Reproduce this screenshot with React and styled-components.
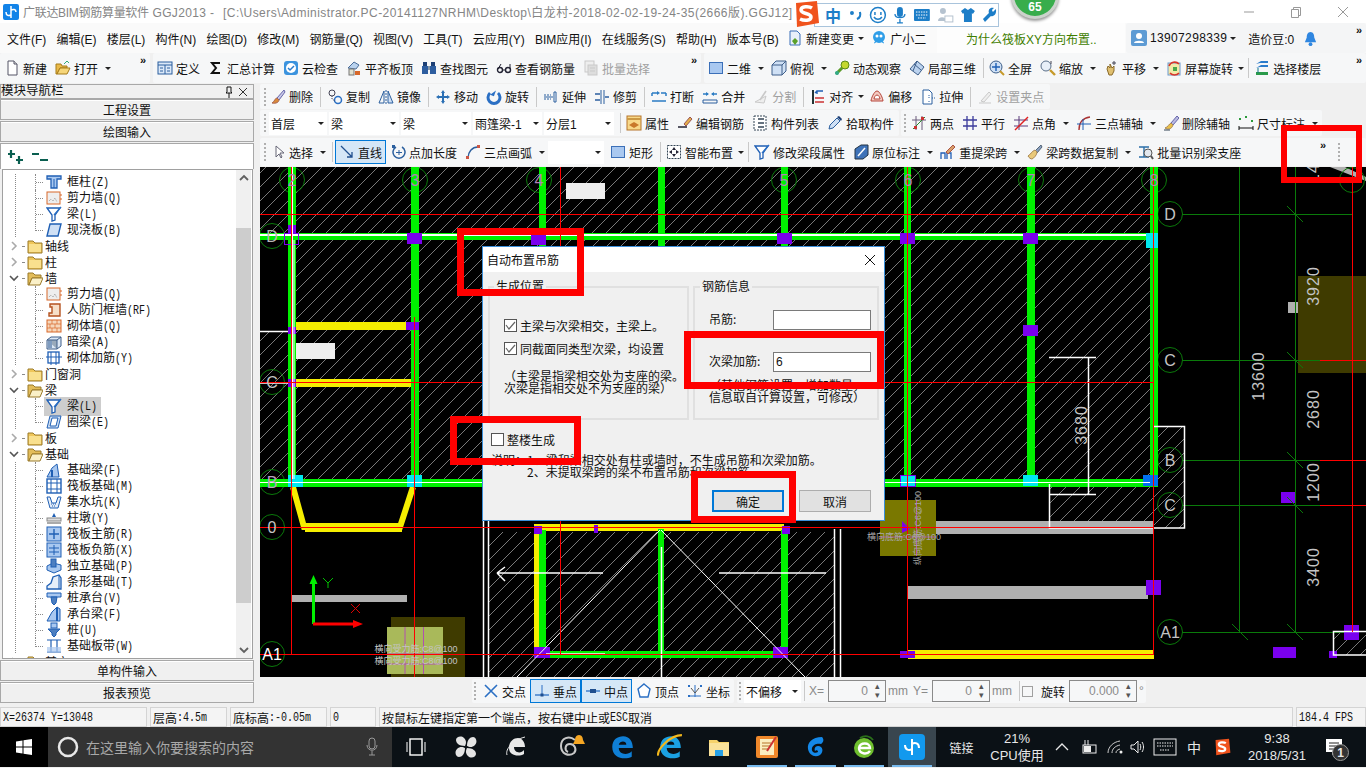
import React from 'react'
import styled, { createGlobalStyle } from 'styled-components'

const GlobalStyle = createGlobalStyle`
  html, body {
    background: #f0f0f0;
    margin: 0;
    padding: 0;
  }

  body {
    color: #111;
    font-family: "Liberation Sans", "Noto Sans CJK SC", sans-serif;
    font-size: 12px;
    overflow: hidden;
  }
`

const Root = styled.div`
  display: flex;
  flex-flow: column;
  height: 768px;
  overflow: hidden;
  position: relative;
  width: 1366px;
`

/* ---------- icons ---------- */

const B = '#1f5fb4'
const L = '#a9c8f0'
const O = '#d8682a'
const G = '#c9c9c9'

const icons = {
  doc: <><path d="M4 1h6l3 3v11H4z" fill="#fff" stroke="#556" /><path d="M10 1v3h3" fill="#ddd" stroke="#556" /></>,
  open: <><path d="M1 4h5l1 2h5v2H5l-3 6H1z" fill="#e9b949" stroke="#a67c1a" /><path d="M5 8h10l-3 6H2z" fill="#f6d67a" stroke="#a67c1a" /><path d="M9 4l3-3 2 2" fill="none" stroke="#3a7" /></>,
  define: <><rect x="1" y="2" width="14" height="12" fill="#dbe8f8" stroke="#2b5f9e" /><path d="M1 5h14M8 5v9M3 8h3M3 11h3M10 8h3M10 11h3" stroke="#2b5f9e" /></>,
  sigma: <path d="M12 3H4l4 5-4 5h8" fill="none" stroke="#111" strokeWidth="2" />,
  cloud: <><rect x="1" y="1" width="14" height="14" rx="3" fill="#3b93de" /><circle cx="8" cy="8" r="5" fill="#fff" /><path d="M5 8l2 2 4-4" fill="none" stroke="#2b7ccc" strokeWidth="1.5" /></>,
  flush: <><path d="M2 8l6-6 5 3-3 4z" fill="#b9d2ee" stroke="#4a6d99" /><rect x="3" y="9" width="5" height="6" fill="#e0e0d0" stroke="#777" /><rect x="9" y="11" width="5" height="4" fill={O} /></>,
  binoc: <><rect x="2" y="2" width="4" height="4" fill="#1c3f75" /><rect x="10" y="2" width="4" height="4" fill="#1c3f75" /><rect x="1" y="6" width="6" height="8" fill="#2d5d9f" /><rect x="9" y="6" width="6" height="8" fill="#2d5d9f" /><rect x="7" y="6" width="2" height="4" fill="#89a" /></>,
  glasses: <><circle cx="4" cy="10" r="2.5" fill="none" stroke="#223" strokeWidth="1.4" /><circle cx="12" cy="10" r="2.5" fill="none" stroke="#223" strokeWidth="1.4" /><path d="M6 10h3M2 9l3-5M14 9V4" fill="none" stroke="#223" /></>,
  batch: <><rect x="2" y="1" width="9" height="11" fill="#eee" stroke={G} /><rect x="5" y="5" width="9" height="10" fill="#ddd" stroke={G} /><path d="M7 8h5M7 11h5" stroke={G} /></>,
  square: <rect x="1.5" y="2.5" width="13" height="11" fill={L} stroke="#3b6fb8" />,
  cube: <><path d="M1 5l4-4h10v10l-4 4H1z" fill="#cfe0f5" stroke="#3e5f8a" /><path d="M1 5h10v10M11 5l4-4" fill="none" stroke="#3e5f8a" /></>,
  orbit: <><path d="M2 14L12 4" stroke="#5a9a2a" strokeWidth="3" /><circle cx="11" cy="5" r="4" fill="#c4d82e" stroke="#5a8a1a" /><circle cx="3" cy="13" r="2" fill="#3a8" /></>,
  partial: <><path d="M8 1l7 6-6 8-8-6z" fill="#bcd3ef" stroke="#3e5f8a" /><path d="M5 4l7 6M8 1L4 11" stroke="#3e5f8a" /></>,
  full: <><circle cx="7" cy="7" r="6" fill="#cfe0f5" stroke="#3e5f8a" /><path d="M7 3v8M3 7h8" stroke={B} strokeWidth="1.4" /><path d="M11 11l4 4" stroke="#c69a2a" strokeWidth="2" /></>,
  zoom: <><circle cx="6" cy="6" r="5" fill="#e8eff8" stroke="#5a6f8a" /><path d="M10 10l5 5" stroke="#c69a2a" strokeWidth="2.4" /><path d="M11 1v3" stroke="#445" /></>,
  hand: <><path d="M4 9l1-3 2 2V4l2 4 2-2v5l-2 4H6z" fill="#e0c070" stroke="#8a6a2a" /><path d="M11 1v4M9 3h4" stroke="#445" /></>,
  screen: <><rect x="2" y="3" width="12" height="12" fill="#f3e9a8" stroke="#6a9ad0" /><path d="M3 6a6 6 0 0 1 10-2M13 13a6 6 0 0 1-9 0" fill="none" stroke="#d9352a" strokeWidth="1.6" /><rect x="7" y="7" width="4" height="4" fill="#4aa84a" /></>,
  floors: <><path d="M2 4l5-3h7v2H6zM2 8l5-3h7v2H6z" fill="#2b7ccc" /><path d="M2 12h12v3H2z" fill="#2a9a4a" /><path d="M4 8v5" stroke="#178" /></>,
  brush: <><path d="M14 1L7 9l2 2 6-8z" fill="#c9c9e8" stroke="#66a" /><path d="M7 9c-2 0-2 3-5 5 4 1 7-1 7-3z" fill="#d98a3a" stroke="#a65" /></>,
  copy: <><circle cx="5" cy="4" r="3" fill="none" stroke="#445" /><circle cx="11" cy="11" r="3.5" fill="none" stroke="#2a6fc4" strokeWidth="1.5" /><path d="M5 7v3l3 2" fill="none" stroke="#445" strokeDasharray="1 1" /></>,
  mirror: <><path d="M6 2v12H1z" fill="none" stroke="#2b5f9e" /><path d="M10 2v12h5z" fill="#cfe0f5" stroke="#2b5f9e" /><path d="M8 1v14" stroke="#2b5f9e" strokeDasharray="2 1" /></>,
  move: <path d="M8 1l2 3H9v3h3V6l3 2-3 2V9H9v3h1l-2 3-2-3h1V9H4v1L1 8l3-2v1h3V4H6z" fill="#2a6fb4" />,
  spin: <><path d="M4 4a6 6 0 1 0 8 0" fill="none" stroke="#2a6fc4" strokeWidth="3" /><path d="M9 1v6H5z" fill="#2a6fc4" transform="rotate(20 8 4)" /></>,
  extend: <><path d="M1 6h7M1 10h7" stroke="#2b5f9e" strokeDasharray="2 1" /><path d="M11 3h2v10h-2z" fill="#fff" stroke="#2b5f9e" /><path d="M1 8h9" stroke="#2b5f9e" /></>,
  trim: <><path d="M7 1v14M10 1v14" stroke="#2b5f9e" /><path d="M1 5h5M1 11h5M11 8h4" stroke="#2b5f9e" strokeWidth="1.4" /></>,
  split: <><path d="M1 4h5M10 4h5M1 4v3M15 4v3M1 12h14" stroke="#2b7cc4" strokeWidth="1.5" /><path d="M6 2l3 2-3 2z" fill="#2b7cc4" /></>,
  merge: <><path d="M1 11h14v3H1z" fill="none" stroke="#2b5f9e" /><path d="M1 5h5M10 5h5" stroke="#2b7cc4" strokeWidth="1.4" /><path d="M4 3l3 2-3 2zM12 3L9 5l3 2z" fill="#2b7cc4" /></>,
  cut: <><path d="M2 13l11-6-2 7z" fill="#eee" stroke={G} /><path d="M7 11l6-9" stroke={G} strokeWidth="1.6" /></>,
  align: <><path d="M3 1v14" stroke="#233" strokeWidth="2" /><path d="M13 2H7v3M7 2L5 4" fill="none" stroke={B} strokeWidth="1.4" /><path d="M5 9h9M5 13h9" stroke="#c33" strokeWidth="1.4" /></>,
  offset: <><path d="M8 2c3 0 6 8 6 10H2C2 10 5 2 8 2z" fill="#f3c9c0" stroke="#b5453a" /><path d="M8 6c2 0 3 3 3 4H5c0-1 1-4 3-4z" fill="#fff" stroke="#b5453a" /></>,
  stretch: <><path d="M3 1h6l3 3v11H3z" fill="#fff" stroke="#2b5f9e" /><path d="M9 6v3M9 12v2M12 9h3" stroke="#2b5f9e" strokeDasharray="1 1" /></>,
  grip: <><path d="M2 14h12" stroke={G} /><path d="M4 12L12 3l2 2-7 8z" fill="#eee" stroke={G} /></>,
  prop: <><rect x="1" y="1" width="14" height="14" fill="#f8d98a" stroke="#b5752a" /><path d="M1 4h14" stroke="#c94" strokeWidth="2" /><path d="M3 10l5-3 5 3-5 3z" fill="#c9792a" /></>,
  edit: <><path d="M1 12h9" stroke="#223" strokeWidth="1.5" /><path d="M7 9l6-7 2 2-6 7z" fill="#e5b04a" stroke="#955" /></>,
  list: <><rect x="2" y="1" width="12" height="14" fill="#fff" stroke="#345" strokeDasharray="2 1" /><path d="M6 4h6M6 8h6M6 12h6" stroke="#345" strokeWidth="1.4" /></>,
  pick: <><path d="M2 14l1-4 7-7 3 3-7 7z" fill="#cfe0f5" stroke="#2b5f9e" /><path d="M10 2l2-1 3 3-1 2z" fill="#1c3f75" /></>,
  two: <><path d="M1 5h14M5 1v14M11 1v14" stroke="#6a5a7a" /><path d="M2 14L14 2" stroke="#2a8a2a" /><rect x="3" y="11" width="3" height="3" fill="#c33" /><rect x="10" y="2" width="3" height="3" fill="#c33" /></>,
  parallel: <path d="M1 5h14M1 11h14M5 1v14M11 1v14" stroke="#3b3b9b" strokeWidth="1.3" />,
  angle: <><path d="M1 5h14M1 11h14M6 1v14" stroke="#5a3b7b" /><path d="M2 15L15 2" stroke="#e02020" strokeWidth="1.4" /></>,
  arc3: <><path d="M3 15C3 7 7 3 14 2" fill="none" stroke="#a33" strokeWidth="1.4" /><path d="M1 9h14M7 4v11" stroke={B} /></>,
  broom: <><path d="M14 1l-6 7 2 2 6-7z" fill="#b9b9e0" stroke="#66a" /><path d="M8 8c-2 1-3 4-6 5 3 2 7 1 8-3z" fill="#e9c04a" stroke="#a85" /><path d="M1 15h6" stroke="#345" /></>,
  dim: <><path d="M1 11v4M15 11v4M1 13h14" stroke="#111" /><rect x="1" y="3" width="2" height="2" fill="#2a9a3a" /><rect x="7" y="1" width="2" height="2" fill="#2a9a3a" /><rect x="13" y="5" width="2" height="2" fill="#2a9a3a" /></>,
  pointer: <path d="M6 2v11l3-3 2 4 1-1-2-4h4z" fill="#fff" stroke="#667" />,
  line: <path d="M2 2l11 11M13 8v5H8" fill="none" stroke="#1f4f8f" strokeWidth="1.3" />,
  addlen: <><path d="M6 3a6 6 0 1 0 6 0" fill="none" stroke="#2b5f9e" strokeWidth="1.5" /><path d="M9 6v5M6 8.500h6" stroke="#2b5f9e" /><rect x="2" y="1" width="3" height="3" fill="#2b5f9e" /></>,
  arc: <><path d="M3 14C3 8 7 3 13 3" fill="none" stroke="#2b5f9e" strokeWidth="1.4" /><rect x="1" y="12" width="3" height="3" fill="#c54" /><rect x="12" y="1" width="3" height="3" fill="#c54" /></>,
  smart: <><rect x="1.500" y="1.500" width="13" height="13" fill="#fff" stroke="#345" strokeDasharray="2 1" /><path d="M8 3l2 3H6zM8 13l2-3H6zM3 8l3-2v4zM13 8l-3-2v4z" fill="#223" /></>,
  funnel: <><path d="M1 2h13L9 9v5L6 15V9z" fill="#fff" stroke={B} strokeWidth="1.300" /><path d="M15 1L8 9" stroke="#2a6fc4" strokeWidth="1.400" /></>,
  mark: <><path d="M2 15V5l6-4h7v10l-5 4z" fill="#3e72b8" stroke="#234" /><path d="M5 12l7-8" stroke="#fff" strokeWidth="1.500" /></>,
  refetch: <><path d="M1 15V9h4v6M7 15V9h4v6" fill="none" stroke={B} strokeWidth="1.300" /><path d="M6 8l7-7 2 2-7 7z" fill="#d9a06a" stroke="#a54" /></>,
  sweep: <><path d="M14 1L8 7l2 2 5-6z" fill="#8aa0c0" stroke="#567" /><path d="M8 6C5 7 3 11 1 12c1 2 3 3 4 3 2-1 5-4 5-7z" fill="#e9c97a" stroke="#a85" /></>,
  detect: <><path d="M1 3h10M6 3v10M1 13h10" stroke="#2b6fa8" strokeWidth="1.400" /><circle cx="10" cy="9" r="4" fill="#e3e8ee" stroke="#555" /><path d="M13 12l2 3" stroke="#555" strokeWidth="2" /></>,
  cross: <path d="M2 2l12 12M14 2L2 14" stroke="#2a6fc4" strokeWidth="1.600" />,
  perp: <><path d="M1 12h14" stroke="#2a6fc4" strokeWidth="1.300" /><path d="M8 2v10" stroke="#2a6fc4" /><rect x="6.500" y="10.500" width="3" height="3" fill="#1f4f8f" /></>,
  mid: <><path d="M1 8h14" stroke="#2a6fc4" strokeWidth="1.300" /><rect x="5" y="6" width="6" height="4" fill="#1f4f8f" /></>,
  vertex: <path d="M8 1l6 5-2 8H4L2 6z" fill="#fff" stroke="#2a6fc4" strokeWidth="1.400" />,
  coord: <><path d="M2 13h12M8 2v12" stroke="#2a6fc4" /><path d="M4 5l4 5 4-5" fill="none" stroke="#555" /><rect x="1" y="2" width="2" height="2" fill="#2a6fc4" /><rect x="13" y="2" width="2" height="2" fill="#2a6fc4" /><rect x="1" y="12" width="2" height="2" fill="#2a6fc4" /></>,
  page: <><path d="M3 1h7l3 3v11H3z" fill="#e8f0fa" stroke="#3a6fb8" /><path d="M8 15l-3-4 3-3 3 3z" fill="#5aa02a" /></>,
  buddy: <><circle cx="8" cy="7" r="6" fill="#2f9ee8" /><circle cx="6" cy="6" r="1.500" fill="#fff" /><circle cx="10" cy="6" r="1.500" fill="#fff" /><path d="M5 10c2 2 4 2 6 0M3 13l2-1M13 13l-2-1" stroke="#2f9ee8" fill="none" /></>,
  account: <><rect x="0" y="0" width="16" height="16" rx="2" fill="#5d9bd4" /><circle cx="8" cy="6" r="3" fill="#fff" /><path d="M3 13c0-3 10-3 10 0z" fill="#fff" /></>,
  bell: <><path d="M8 1c3 0 4 3 4 6l2 5H2l2-5c0-3 1-6 4-6z" fill="#2f86e0" /><circle cx="8" cy="14" r="2" fill="#2f86e0" /></>,
  tcol: <><path d="M1 2h14v3h-4v9H5V5H1z" fill={L} stroke={B} strokeWidth="1.300" /><path d="M8 5v9" stroke={B} /></>,
  shear: <><rect x="1" y="2" width="13" height="12" fill="#eee" stroke={O} /><path d="M3 11l2-2 2 2 2-3 2 4" fill="none" stroke="#999" strokeDasharray="1 1" /><path d="M14 5h2M14 9h2" stroke={O} /></>,
  slab: <path d="M4 2h11l-3 12H1z" fill="#cfe0f5" stroke={B} strokeWidth="1.400" />,
  frame: <path d="M4 2h10v12H3v-3h3V5H4z" fill="#f6dfc8" stroke="#b5521f" strokeWidth="1.400" />,
  brick: <><rect x="1" y="2" width="14" height="12" fill="#f6d8bc" stroke={O} /><path d="M1 6h14M1 10h14M6 2v4M11 2v4M4 6v4M9 6v4M6 10v4M11 10v4" stroke={O} strokeWidth=".7" /></>,
  dark: <><path d="M1 6l4-3h10v9l-4 3H1z" fill="#dce8f6" stroke="#3e5f8a" /><path d="M1 6h10v9M11 6l4-3" fill="#9ab" stroke="#3e5f8a" /><rect x="2" y="7" width="4" height="7" fill="#7f9cc0" /></>,
  rebar: <><rect x="2" y="2" width="11" height="11" fill="#fff" stroke={B} strokeWidth="1.300" /><path d="M0 7h16M5 2v13M10 2v13" stroke={B} /></>,
  ring: <path d="M4 2h11l-3 12H1zM6 4l-2 8h6l2-8z" fill="#cfe0f5" fillRule="evenodd" stroke={B} />,
  basebeam: <><path d="M1 15l5-9 5-4 2 13z" fill={L} stroke={B} /><path d="M6 15V8" stroke={B} strokeWidth="2" /></>,
  raft: <><rect x="1" y="1" width="14" height="14" fill="#fff" stroke={B} strokeWidth="1.400" /><path d="M1 5h14M1 11h14M5 1v14M11 1v14" stroke={B} /></>,
  pit: <><path d="M1 3h3l2 6h4l2-6h3l-3 11H4z" fill="#e6eef8" stroke={B} /><path d="M5 10h6M6 12h4" stroke={B} strokeDasharray="1 1" /></>,
  pier: <><path d="M6 7l2-4 2 4z" fill={B} /><rect x="1" y="8" width="14" height="3" fill="#ddd" stroke="#888" /><rect x="1" y="12" width="14" height="2" fill="#aaa" /></>,
  mainbar: <><rect x="1" y="1" width="14" height="14" fill={L} stroke={B} /><path d="M8 3v10M3 8h10" stroke={B} strokeWidth="1.400" /></>,
  negbar: <><rect x="1" y="1" width="14" height="14" fill={L} stroke={B} /><path d="M3 6h10M3 10h10M8 3v10" stroke={B} /></>,
  iso: <><path d="M1 8l6-3 8 2v5l-7 3-7-3z" fill={L} stroke={B} /><rect x="5" y="1" width="5" height="8" fill="#4d7fc0" stroke={B} /></>,
  strip: <><path d="M1 15v-3l4-3 2-6 6-2 2 3v11z" fill="#e6eef8" stroke={B} strokeWidth="1.300" /><path d="M13 1v14" stroke={B} /></>,
  cap: <><path d="M1 3h14v4H1z" fill={L} stroke={B} /><path d="M5 7h6l-1 6-2 2-2-2z" fill="#4d7fc0" stroke={B} /></>,
  capbeam: <><path d="M1 15l5-9 5-5 3 2v12z" fill={L} stroke={B} /><path d="M11 1v14" stroke={B} strokeWidth="2" /></>,
  pile: <><rect x="5" y="1" width="6" height="5" fill={L} stroke={B} /><path d="M2 7h12l-4 4v2l-2 2-2-2v-2z" fill="#4d7fc0" stroke={B} /></>,
  band: <><path d="M1 2h14M1 14h14M5 2v12M11 2v12" stroke={B} strokeWidth="1.200" /><rect x="1" y="9" width="14" height="5" fill={L} opacity=".7" /></>,
  closed: <><path d="M1 3h5l2 2h7v10H1z" fill="#efc65a" stroke="#9a7a2a" /><path d="M2 6h12v8H2z" fill="#f9e08e" /></>,
  opened: <><path d="M1 3h5l2 2h6v3H5l-3 7H1z" fill="#e3bd5a" stroke="#9a7a2a" /><path d="M5 8h11l-3 7H2z" fill="#faf0c8" stroke="#9a7a2a" /></>
}

const Svg = styled.svg`
  flex: none;
  height: ${({ $size }) => $size || 16}px;
  width: ${({ $size }) => $size || 16}px;
`

const Glyph = ({ name, size }) => (
  <Svg $size={size} viewBox="0 0 16 16">{icons[name]}</Svg>
)

/* ---------- title bar and menu ---------- */

const TitleBar = styled.div`
  align-items: center;
  background: #fff;
  display: flex;
  flex: none;
  height: 23px;
  padding-left: 3px;
`

const TitleText = styled.div`
  color: #858585;
  margin-left: 4px;
  white-space: pre;
`

const TitleHead = styled.span`
  letter-spacing: -0.3px;
`

const TitleApp = styled.span`
  letter-spacing: 0.36px;
`

const TitlePath = styled.span`
  letter-spacing: 0.45px;
  margin-left: 5px;
`

const WindowButtons = styled.div`
  display: flex;
  margin-left: auto;
`

const WindowButton = styled.div`
  align-items: center;
  display: flex;
  height: 23px;
  justify-content: center;
  width: 47px;
`

const MenuBar = styled.div`
  background: #fafafa;
  display: flex;
  flex: none;
  height: 30px;
`

const MenuLeft = styled.div`
  align-items: center;
  display: flex;
  flex: none;
  gap: 10.2px;
  padding-left: 7px;
  width: 930px;
`

const MenuItem = styled.span`
  white-space: nowrap;
`

const MenuTool = styled.div`
  align-items: center;
  display: flex;
  gap: 3px;
  letter-spacing: ${({ $spaced }) => ($spaced ? '0.35px' : 0)};
  margin-left: ${({ $ml }) => $ml || 0}px;
  white-space: nowrap;
`

const News = styled.div`
  align-items: center;
  background: #fdfdfd;
  color: #3f7d00;
  display: flex;
  flex: none;
  padding-left: 29px;
  width: 159px;
`

const Account = styled.div`
  align-items: center;
  background: #f4f5f6;
  border-radius: 2px;
  display: flex;
  flex: 1;
  margin-left: 1px;
  padding-left: 5px;
`

/* ---------- tool strips ---------- */

const Strip = styled.div`
  display: flex;
  flex: none;
  height: ${({ $h }) => $h}px;
  margin-top: ${({ $mt }) => $mt || 0}px;
`

const Group = styled.div`
  align-items: center;
  background: #f6f7f8;
  border-radius: 2px;
  display: flex;
  flex: ${({ $w }) => ($w ? 'none' : 1)};
  margin-right: ${({ $mr }) => $mr || 0}px;
  position: relative;
  width: ${({ $w }) => ($w ? `${$w}px` : 'auto')};
`

const ToolButton = styled.div`
  align-items: center;
  background: ${({ $active }) => ($active ? '#d5e7f7' : 'transparent')};
  box-shadow: ${({ $active }) => ($active ? 'inset 0 0 0 1px #0078d7' : 'none')};
  color: ${({ $off }) => ($off ? '#a0a0a0' : '#111')};
  display: flex;
  flex: none;
  gap: 3px;
  height: ${({ $active }) => ($active ? '24px' : 'auto')};
  padding: 0 4px;
  white-space: nowrap;
`

const Tool = ({ icon, active, off, children }) => (
  <ToolButton $active={active} $off={off}>
    <Glyph name={icon} />
    {children}
  </ToolButton>
)

const Arrow = styled.span`
  align-items: center;
  display: flex;
  flex: none;
  justify-content: center;
  width: ${({ $tight }) => ($tight ? 8 : 12)}px;

  &::after {
    border-left: 3px solid transparent;
    border-right: 3px solid transparent;
    border-top: 3px solid #222;
    content: '';
  }
`

const Sep = styled.span`
  background: #c9c9c9;
  flex: none;
  height: 20px;
  margin: 0 ${({ $mr }) => $mr ?? 2}px 0 ${({ $ml }) => $ml || 3}px;
  width: 1px;
`

const Gripper = styled.span`
  border-left: 2px dotted #b0b0b0;
  flex: none;
  height: 18px;
  margin-left: ${({ $ml }) => $ml || 4}px;
  margin-right: ${({ $mr }) => $mr || 0}px;
  width: 0;
`

const More = styled.span`
  align-self: flex-start;
  flex: none;
  font-size: 11px;
  font-weight: bold;
  line-height: 14px;
  margin-left: auto;
  margin-right: 4px;
`

const Combo = styled.div`
  align-items: center;
  background: #fff;
  box-sizing: border-box;
  display: flex;
  flex: none;
  height: 23px;
  justify-content: space-between;
  margin-right: ${({ $mr }) => $mr || 0}px;
  padding-left: 2px;
  width: ${({ $w }) => $w}px;
`

/* ---------- left panel ---------- */

const Workspace = styled.div`
  display: flex;
  flex: none;
  height: 623px;
`

const LeftPanel = styled.div`
  display: flex;
  flex: none;
  flex-flow: column;
  width: 254px;
`

const PanelHeader = styled.div`
  align-items: center;
  border: 1px solid #a8a8a8;
  box-sizing: border-box;
  display: flex;
  flex: none;
  font-size: 12.500px;
  height: 15px;
  margin-top: 1px;
  padding-right: 3px;
`

const PanelTitle = styled.span`
  flex: 1;
  line-height: 13px;
`

const NavButton = styled.div`
  align-items: center;
  background: #f0f0f0;
  border: 1px solid #a8a8a8;
  box-shadow: inset 0 1px 0 #fff;
  box-sizing: border-box;
  display: flex;
  flex: none;
  height: 21px;
  justify-content: center;
  margin-bottom: 1px;
`

const TreeTools = styled.div`
  align-items: center;
  background: #fff;
  border: 1px solid #a8a8a8;
  border-bottom: 0;
  box-sizing: border-box;
  display: flex;
  flex: none;
  gap: 7px;
  height: 26px;
  padding-left: 6px;
`

const TreeBox = styled.div`
  background: #fff;
  border: 1px solid #a0a0a0;
  box-sizing: border-box;
  display: flex;
  flex: none;
  height: 490px;
  margin: 0 1px 1px 2px;
  overflow: hidden;
`

const TreeList = styled.div`
  flex: 1;
  font-family: "Noto Sans CJK SC", sans-serif;
  overflow: hidden;
  padding-top: 4px;
`

const dotted = '#8a8a8a'

const Row = styled.div`
  align-items: center;
  background: ${({ $line }) => ($line
    ? `linear-gradient(${dotted} 50%, transparent 50%) 12px 0 / 1px 2px repeat-y`
    : 'none')};
  display: flex;
  height: 16px;
  line-height: 16px;
  padding-left: ${({ $pad }) => $pad}px;
  white-space: nowrap;
`

const Chevron = styled.svg`
  flex: none;
  height: 10px;
  width: 10px;
`

const Dots = styled.span`
  border-top: 1px dotted ${dotted};
  flex: none;
  margin: 0 3px;
  width: 2px;
`

const Guide = styled.span`
  align-self: flex-start;
  background: repeating-linear-gradient(90deg, ${dotted} 0 1px, transparent 1px 2px) 0 8px / 100% 1px no-repeat;
  border-left: 1px dotted ${dotted};
  flex: none;
  height: ${({ $last }) => ($last ? 9 : 16)}px;
  width: 8px;
`

const Entry = styled.span`
  align-items: center;
  background: ${({ $on }) => ($on ? '#cdcdcd' : 'transparent')};
  display: flex;
  gap: 5px;
  padding: 0 4px 0 2px;
`

const Hot = styled.span`
  display: inline-block;
  font-family: "Liberation Mono", monospace;
  font-size: 10px;
  transform: scaleY(1.2);
`

const ScrollBar = styled.div`
  background: #f0f0f0;
  display: flex;
  flex: none;
  flex-flow: column;
  margin-right: 1px;
  width: 15px;
`

const ScrollCap = styled.div`
  align-items: center;
  display: flex;
  flex: none;
  height: 16px;
  justify-content: center;
`

const ScrollTrack = styled.div`
  flex: 1;
  padding-top: 42px;
`

const ScrollThumb = styled.div`
  background: #cdcdcd;
  height: 375px;
`

const Folder = ({ name, open }) => (
  <Row $pad={6}>
    <Chevron viewBox="0 0 10 10">
      <path d={open ? 'M1 3l4 4 4-4' : 'M3 1l4 4-4 4'} fill="none" stroke={open ? '#555' : '#aaa'} strokeWidth="1.600" />
    </Chevron>
    <Dots />
    <Glyph name={open ? 'opened' : 'closed'} />
    <Entry>{name}</Entry>
  </Row>
)

const Leaf = ({ icon, name, hot, last, on }) => (
  <Row $line $pad={32}>
    <Guide $last={last} />
    <Entry $on={on}>
      <Glyph name={icon} />
      <span>{name}<Hot>({hot})</Hot></span>
    </Entry>
  </Row>
)

const tree = [
  ['tcol', '框柱', 'Z'], ['shear', '剪力墙', 'Q'], ['funnel', '梁', 'L'], ['slab', '现浇板', 'B', 'last'],
  ['轴线'], ['柱'], ['墙', 'open'],
  ['shear', '剪力墙', 'Q'], ['frame', '人防门框墙', 'RF'], ['brick', '砌体墙', 'Q'], ['dark', '暗梁', 'A'], ['rebar', '砌体加筋', 'Y', 'last'],
  ['门窗洞'], ['梁', 'open'],
  ['funnel', '梁', 'L', 'on'], ['ring', '圈梁', 'E', 'last'],
  ['板'], ['基础', 'open'],
  ['basebeam', '基础梁', 'F'], ['raft', '筏板基础', 'M'], ['pit', '集水坑', 'K'], ['pier', '柱墩', 'Y'],
  ['mainbar', '筏板主筋', 'R'], ['negbar', '筏板负筋', 'X'], ['iso', '独立基础', 'P'], ['strip', '条形基础', 'T'],
  ['cap', '桩承台', 'V'], ['capbeam', '承台梁', 'F'], ['pile', '桩', 'U'], ['band', '基础板带', 'W', 'last'],
  ['其它']
]

/* ---------- canvas ---------- */

const RightColumn = styled.div`
  display: flex;
  flex: 1;
  flex-flow: column;
  margin-left: 6px;
`

const Canvas = styled.div`
  background: #000;
  flex: none;
  height: 510px;
  margin-top: 1px;
`

const Sheet = styled.svg`
  display: block;
`

const CadText = styled.text`
  fill: ${({ $c }) => $c || '#c4c4c4'};
  font-family: "Liberation Sans", "Noto Sans CJK SC", sans-serif;
  font-size: ${({ $s }) => $s || 14}px;
  text-anchor: middle;
`

const GREEN = '#00f000'
const YEL = '#f5ee00'
const PUR = '#7a00ee'
const CY = '#00e8f0'
const GRY = '#b0b0b0'

const hatches = [
  [260, 168, 894, 66], [296, 241, 858, 239], [260, 332, 28, 148], [1154, 427, 30, 102],
  [1049, 488, 105, 34], [488, 533, 346, 145], [1333, 632, 33, 24]
]

const blocks = [
  [1298, 277, 68, 97, '#3f3b00'], [1288, 303, 10, 11, GRY],
  [288, 168, 8, 320, GREEN], [411, 168, 8, 320, GREEN], [539, 168, 7, 320, GREEN], [658, 168, 7, 320, GREEN],
  [781, 168, 7, 320, GREEN], [904, 168, 7, 320, GREEN], [1027, 168, 8, 320, GREEN], [1150, 168, 8, 320, GREEN],
  [260, 234, 898, 7, GREEN], [260, 480, 898, 8, GREEN],
  [260, 235, 890, 2, '#fff'],
  [296, 323, 110, 8, YEL], [296, 380, 115, 8, YEL],
  [534, 525, 250, 7, YEL], [534, 530, 5, 125, YEL], [539, 531, 7, 124, GREEN], [658, 530, 6, 125, GREEN], [781, 531, 7, 124, GREEN],
  [534, 652, 254, 7, GREEN],
  [292, 596, 115, 7, GRY], [936, 522, 217, 13, GRY], [908, 587, 240, 13, GRY], [908, 651, 246, 9, YEL],
  [288, 226, 8, 8, PUR], [407, 234, 15, 11, PUR], [531, 235, 15, 11, PUR], [777, 234, 15, 11, PUR],
  [900, 234, 15, 11, PUR], [1023, 234, 15, 11, PUR], [1023, 326, 15, 11, PUR], [288, 328, 8, 7, PUR], [288, 380, 8, 8, PUR],
  [406, 323, 13, 8, PUR], [534, 527, 8, 8, PUR], [782, 527, 8, 8, PUR], [594, 526, 4, 8, PUR],
  [534, 648, 16, 11, PUR], [773, 648, 15, 11, PUR],
  [1146, 234, 12, 15, CY], [288, 476, 15, 12, CY], [407, 476, 15, 12, CY], [900, 476, 16, 11, CY], [1023, 476, 15, 11, CY],
  [1143, 476, 15, 11, '#0070f0'],
  [1146, 581, 15, 15, PUR], [900, 652, 15, 7, PUR], [1273, 648, 23, 11, PUR], [1329, 652, 8, 7, PUR], [1344, 626, 15, 15, PUR], [1281, 493, 14, 11, PUR],
  [566, 184, 39, 16, '#eee'], [296, 344, 39, 16, '#eee']
]

const thinWhite = ['M292.500 168V480', 'M294 241V480', 'M660 531L517 678', 'M661 531L805 678', 'M260 483.500H1150']

const whiteLines = [
  'M260 332.500H288', 'M260 384H288',
  'M483.500 520V678', 'M488.500 520V678', 'M834.500 530V678', 'M840.500 530V678',
  'M661.500 548V678', 'M497 574H603M497 574l8-6M497 574l8 8', 'M719 574H826',
  'M546 655H605', 'M1049 358.500H1096', 'M1049 495.500H1096', 'M1088.500 358V495',
  'M1154 427.500H1184.500V529H1049.500V485', 'M1366 632.500H1333.500V656H1366'
]

const redLines = [
  'M260 215.500H1154', 'M260 383.500H1154', 'M260 528.500H1154', 'M260 655.500H1154',
  'M291.500 168V655', 'M414.500 318V678', 'M560.500 168V655', 'M907.500 168V655', 'M1153.500 168V655', 'M1352.500 168V633',
  'M1320 361.500H1366', 'M1320 461.500H1366', 'M1320 506.500H1366'
]

const darkLines = [
  'M1182 215.500H1352', 'M1182 361.500H1352', 'M1182 461.500H1352', 'M1182 506.500H1352', 'M1182 633.500H1344',
  'M1239.500 168V633', 'M1295.500 168V633',
  'M1287 207l16 16', 'M1287 353l16 16', 'M1287 453l16 16', 'M1287 498l16 16', 'M1287 625l16 16', 'M1232 625l16 16'
]

const TOP = '#b080b8'
const axes = [
  [292, 181, '2', TOP], [415, 181, '3', TOP], [539, 181, '4', TOP], [784, 181, '5', TOP],
  [908, 181, '6', TOP], [1031, 181, '7', TOP], [1154, 181, '8', TOP],
  [272, 237, 'D', '#b8b8b8'], [272, 383, 'C', '#c4c4c4'], [272, 483, 'B', '#b8a0c0'], [272, 528, '0', '#c4c4c4'], [272, 655, 'A1', '#fff'],
  [1170, 215, 'D'], [1170, 361, 'C'], [1170, 461, 'B'], [1170, 506, 'C'], [1170, 633, 'A1'], [1352, 181, '']
]

const dims = [
  ['13600', 1258, 377], ['3920', 1313, 287], ['2680', 1313, 410], ['1200', 1313, 483], ['3400', 1313, 568], ['14', 1313, 174], ['3680', 1081, 426]
]

const Drawing = () => (
  <Sheet width="1106" height="510" viewBox="260 168 1106 510">
    <defs>
      <pattern id="hatch" width="14" height="14" patternUnits="userSpaceOnUse">
        <path d="M-1 15L15 -1" stroke="#dcdcdc" strokeWidth=".55" shapeRendering="crispEdges" />
      </pattern>
    </defs>
    {hatches.map(([x, y, w, h]) => (
      <rect key={`${x}-${y}`} x={x} y={y} width={w} height={h} fill="url(#hatch)" />
    ))}
    <path d="M1330 168H1345L1366 178V182z" fill={GRY} />
    {axes.map(([x, y]) => (
      <circle key={`${x}-${y}`} cx={x} cy={y} r="12.500" fill="none" stroke="#0b7a0b" />
    ))}
    <path d="M293 488L304 528H400L413 488" fill="none" stroke={YEL} strokeWidth="6" />
    <rect x="305" y="524" width="97" height="9" fill={YEL} />
    <rect x="391" y="618" width="74" height="60" fill="#3f3b00" />
    <rect x="387" y="628" width="56" height="47" fill="#a9b95a" />
    <rect x="880" y="501" width="56" height="56" fill="#7a7800" />
    {blocks.map(([x, y, w, h, c]) => (
      <rect key={`${x}-${y}-${c}`} x={x} y={y} width={w} height={h} fill={c} />
    ))}
    <rect x="284.500" y="234.500" width="14" height="11" fill="none" stroke={PUR} />
    <rect x="900.500" y="476.500" width="15" height="11" fill="none" stroke={PUR} />
    <path d="M405 628V675M423.500 628V675M387 655H443M387 665H443M880 538H936M916.500 501V557" stroke="#b050b0" />
    <path d="M902 522l0 12 8-4z" fill={PUR} />
    {darkLines.map((d) => <path key={d} d={d} stroke="#0a7a0a" fill="none" />)}
    {thinWhite.map((d) => <path key={d} d={d} stroke="#fff" fill="none" />)}
    {whiteLines.map((d) => <path key={d} d={d} stroke="#fff" strokeWidth="1.500" fill="none" />)}
    {redLines.map((d) => <path key={d} d={d} stroke="#ff0000" fill="none" />)}
    <path d="M313.500 625V582" stroke="#00f000" strokeWidth="3" />
    <path d="M313.500 576l-4 9h8z" fill="#00f000" />
    <path d="M313 625H355" stroke="#ff0000" strokeWidth="3" />
    <path d="M363 625l-10-4v8z" fill="#ff0000" />
    <path d="M323 579l5 5 5-5M328 584v5" stroke="#00c000" fill="none" />
    <path d="M351 605l9 9M360 605l-9 9" stroke="#e00000" fill="none" />
    {axes.map(([x, y, t, c]) => (
      <CadText key={`t-${x}-${y}`} x={x} y={y + 6} $s={16} $c={c}>{t}</CadText>
    ))}
    {dims.map(([t, x, y]) => (
      <CadText key={t} x={x} y={y} $s={16} transform={`rotate(-90 ${x} ${y}) translate(0 6)`} letterSpacing="1">{t}</CadText>
    ))}
    <CadText x="416" y="653" $s={9}>横向受力筋:C8@100</CadText>
    <CadText x="416" y="665" $s={9}>横向受力筋:C8@100</CadText>
    <CadText x="904" y="541" $s={9} $c="#a8a8a8">横向底筋:C6@100</CadText>
    <CadText x="921" y="529" $s={9} $c="#a8a8a8" transform="rotate(-90 921 529)">纵向底筋:C6@100</CadText>
  </Sheet>
)

/* ---------- dialog ---------- */

const Dialog = styled.div`
  background: #f0f0f0;
  border: 1px solid #3b8fd9;
  box-sizing: border-box;
  display: flex;
  flex-flow: column;
  font-family: "Noto Sans CJK SC", sans-serif;
  height: 275px;
  left: 482px;
  position: absolute;
  top: 246px;
  width: 403px;
`

const DialogTitle = styled.div`
  align-items: center;
  background: #fff;
  display: flex;
  flex: none;
  height: 25px;
  justify-content: space-between;
  padding: 0 8px 0 4px;
`

const GroupRow = styled.div`
  display: flex;
  gap: 4px;
  margin: 14px 0 0 5px;
`

const Box = styled.div`
  border: 2px solid #e0e0e0;
  box-sizing: border-box;
  height: 134px;
  padding: ${({ $pad }) => $pad};
  position: relative;
  width: ${({ $w }) => $w}px;
`

const Legend = styled.span`
  background: #f0f0f0;
  left: ${({ $x }) => $x}px;
  line-height: 14px;
  padding: 0 2px;
  position: absolute;
  top: -9px;
`

const CheckRow = styled.label`
  align-items: center;
  display: flex;
  gap: 3px;
  height: 13px;
  line-height: 13px;
  margin: ${({ $m }) => $m || '0 0 10px'};
  white-space: nowrap;
`

const CheckBox = styled.span`
  align-items: center;
  background: #fff;
  border: 1px solid #555;
  box-sizing: border-box;
  display: flex;
  flex: none;
  height: 13px;
  justify-content: center;
  width: 13px;
`

const Note = styled.div`
  line-height: 12px;
  margin: ${({ $m }) => $m};
  white-space: nowrap;
`

const Field = styled.div`
  align-items: center;
  display: flex;
  height: 20px;
  margin-bottom: ${({ $mb }) => $mb || 0}px;
`

const FieldLabel = styled.span`
  flex: none;
  line-height: 16px;
  margin-top: -3px;
  width: 64px;
`

const FieldInput = styled.div`
  align-items: center;
  background: #fff;
  border: 1px solid #7a7a7a;
  box-sizing: border-box;
  display: flex;
  font-family: "Liberation Sans", sans-serif;
  height: 20px;
  padding-left: 2px;
  width: 98px;
`

const ButtonRow = styled.div`
  display: flex;
  gap: 15px;
  justify-content: flex-end;
  margin-top: 12px;
  padding-right: 13px;
`

const DialogButton = styled.div`
  align-items: center;
  background: #e1e1e1;
  border: ${({ $primary }) => ($primary ? '2px solid #0078d7' : '1px solid #adadad')};
  box-sizing: border-box;
  display: flex;
  height: 22px;
  justify-content: center;
  width: 72px;
`

const Mark = styled.div`
  border: ${({ $b }) => $b || 7}px solid #ff0000;
  box-sizing: border-box;
  height: ${({ $h }) => $h}px;
  left: ${({ $x }) => $x}px;
  position: absolute;
  top: ${({ $y }) => $y}px;
  width: ${({ $w }) => $w}px;
`

const Tick = () => (
  <svg width="11" height="11" viewBox="0 0 11 11">
    <path d="M1 5l3 4 6-7" fill="none" stroke="#666" strokeWidth="1.200" />
  </svg>
)

/* ---------- snap bar, status, taskbar ---------- */

const SnapBar = styled.div`
  align-items: center;
  display: flex;
  flex: none;
  height: 28px;
  padding-left: 212px;
`

const SnapLabel = styled.span`
  color: #8a8a8a;
  flex: none;
  margin-left: ${({ $ml }) => $ml || 0}px;
  white-space: nowrap;
  width: ${({ $w }) => $w}px;
`

const SnapText = styled.span`
  flex: none;
  white-space: nowrap;
`

const Spin = styled.div`
  align-items: center;
  background: #f6f7f8;
  border: 1px solid #8a8a8a;
  box-sizing: border-box;
  color: #8a8a8a;
  display: flex;
  flex: none;
  height: 22px;
  justify-content: flex-end;
  margin-left: ${({ $ml }) => $ml || 0}px;
  padding-right: 17px;
  position: relative;
  width: ${({ $w }) => $w}px;

  &::after {
    color: #555;
    content: '▴\\A▾';
    font-size: 9px;
    line-height: 9px;
    position: absolute;
    right: 5px;
    top: 1px;
    white-space: pre;
  }
`

const MiniCheck = styled.span`
  background: #f6f7f8;
  border: 1px solid #a0a0a0;
  box-sizing: border-box;
  flex: none;
  height: 11px;
  margin-right: 8px;
  width: 11px;
`

const StatusBar = styled.div`
  display: flex;
  flex: none;
  font-family: "Noto Sans CJK SC", sans-serif;
  gap: 3px;
  height: 21px;
`

const StatusCell = styled.div`
  align-items: center;
  background: #f4f4f4;
  border: 1px solid #d4d4d4;
  box-sizing: border-box;
  display: flex;
  flex: ${({ $w }) => ($w ? 'none' : 1)};
  margin-top: 1px;
  padding-left: 2px;
  white-space: pre;
  width: ${({ $w }) => ($w ? `${$w}px` : 'auto')};
`

const Taskbar = styled.div`
  background: #0b1116;
  color: #e8e8e8;
  display: flex;
  flex: none;
  height: 40px;
`

const Start = styled.div`
  align-items: center;
  background: #000;
  display: flex;
  flex: none;
  justify-content: center;
  width: 48px;
`

const Search = styled.div`
  align-items: center;
  background: #333;
  color: #a8a8a8;
  display: flex;
  flex: none;
  font-size: 14px;
  gap: 7px;
  padding-left: 9px;
  width: 335px;
`

const Slot = styled.div`
  align-items: center;
  background: ${({ $on }) => ($on ? '#39464f' : 'transparent')};
  box-sizing: border-box;
  display: flex;
  flex: none;
  justify-content: center;
  margin-left: ${({ $ml }) => $ml || 0}px;
  position: relative;
  width: ${({ $w }) => $w}px;

  &::after {
    background: #76b9ed;
    bottom: 0;
    content: '';
    display: ${({ $run }) => ($run ? 'block' : 'none')};
    height: 2px;
    left: 4px;
    position: absolute;
    right: 4px;
  }
`

const Stack = styled.div`
  align-items: center;
  display: flex;
  flex: none;
  flex-flow: column;
  font-size: 13px;
  justify-content: center;
  line-height: 17px;
  white-space: nowrap;
  width: ${({ $w }) => $w}px;
`

const TrayText = styled.span`
  font-size: ${({ $s }) => $s || 12}px;
`

const Badge = styled.span`
  align-items: center;
  background: #333;
  border: 1px solid #999;
  border-radius: 50%;
  bottom: 6px;
  box-sizing: border-box;
  display: flex;
  font-size: 12px;
  font-weight: bold;
  height: 17px;
  justify-content: center;
  position: absolute;
  right: 2px;
  width: 17px;
`

const Art = ({ w = 24, h = 24, vb = '0 0 24 24', children }) => (
  <svg width={w} height={h} viewBox={vb}>{children}</svg>
)

const SogouLogo = ({ size = 28 }) => (
  <svg width={size} height={size} viewBox="0 0 28 28">
    <path d="M4 3l21-2 2 22-22 4z" fill="#f0531d" />
    <path d="M20 8c-3-2-11-2-11 2 0 4 10 3 10 7s-7 4-11 2" fill="none" stroke="#fff" strokeWidth="3.500" />
  </svg>
)

/* ---------- overlays on the title bar ---------- */

const ImeLogo = styled.div`
  left: 792px;
  position: absolute;
  top: 0;
`

const ImeBar = styled.div`
  align-items: center;
  background: #fff;
  border: 1px solid #a9c4dc;
  box-sizing: border-box;
  display: flex;
  gap: 6px;
  height: 24px;
  left: 814px;
  padding-left: 10px;
  position: absolute;
  top: 3px;
  width: 185px;
`

const ImeChar = styled.span`
  color: #1d7ec8;
  font-size: 16px;
  font-weight: bold;
  margin-right: 2px;
`

const ScoreBall = styled.div`
  align-items: flex-end;
  background: #38ad4c;
  border: 3px solid #ccd2cc;
  border-radius: 50%;
  box-shadow: 0 2px 3px #999;
  box-sizing: border-box;
  color: #fff;
  display: flex;
  font-size: 12px;
  font-weight: bold;
  height: 48px;
  justify-content: center;
  left: 1011px;
  padding-bottom: 2px;
  position: absolute;
  top: -29px;
  width: 48px;
`

const App = () => (
  <Root>
    <GlobalStyle />

    <TitleBar>
      <Art w={16} h={16} vb="0 0 16 16">
        <rect width="16" height="16" rx="2" fill="#1283e8" />
        <path d="M8 2v12M3 8c0 4 3 4 5 3M13 8c0-3-3-3-5-2" fill="none" stroke="#fff" strokeWidth="1.500" />
      </Art>
      <TitleText>
        <TitleHead>广联达BIM钢筋算量软件</TitleHead>
        <TitleApp> GGJ2013 - </TitleApp>
        <TitlePath>[C:\Users\Administrator.PC-20141127NRHM\Desktop\白龙村-2018-02-02-19-24-35(2666版).GGJ12]</TitlePath>
      </TitleText>
      <WindowButtons>
        <WindowButton>
          <Art w={12} h={12} vb="0 0 12 12"><path d="M1 6h10" stroke="#999" /></Art>
        </WindowButton>
        <WindowButton>
          <Art w={12} h={12} vb="0 0 12 12"><path d="M1.500 3.500h7v8h-7zM3.500 3.500v-2h7v8h-2" fill="none" stroke="#999" /></Art>
        </WindowButton>
        <WindowButton>
          <Art w={12} h={12} vb="0 0 12 12"><path d="M1 1l10 10M11 1L1 11" stroke="#999" /></Art>
        </WindowButton>
      </WindowButtons>
    </TitleBar>

    <MenuBar>
      <MenuLeft>
        {['文件(F)', '编辑(E)', '楼层(L)', '构件(N)', '绘图(D)', '修改(M)', '钢筋量(Q)', '视图(V)', '工具(T)', '云应用(Y)', 'BIM应用(I)', '在线服务(S)', '帮助(H)', '版本号(B)'].map((m) => (
          <MenuItem key={m}>{m}</MenuItem>
        ))}
        <MenuTool $ml={-2}><Glyph name="page" />新建变更<Arrow $tight /></MenuTool>
        <MenuTool $ml={-4}><Glyph name="buddy" />广小二</MenuTool>
      </MenuLeft>
      <News>为什么筏板XY方向布置..</News>
      <Account>
        <Glyph name="account" />
        <MenuTool $ml={3} $spaced>13907298339</MenuTool>
        <Arrow />
        <MenuTool $ml={9}>造价豆:0</MenuTool>
        <MenuTool $ml={9}><Glyph name="bell" size={15} /></MenuTool>
        <More>»</More>
      </Account>
    </MenuBar>

    <Strip $h={30}>
      <Group $w={150} $mr={3}>
        <Tool icon="doc">新建</Tool>
        <Tool icon="open">打开</Tool>
        <Arrow />
        <More>»</More>
      </Group>
      <Group $w={548} $mr={3}>
        <Tool icon="define">定义</Tool>
        <Tool icon="sigma">汇总计算</Tool>
        <Tool icon="cloud">云检查</Tool>
        <Tool icon="flush">平齐板顶</Tool>
        <Tool icon="binoc">查找图元</Tool>
        <Tool icon="glasses">查看钢筋量</Tool>
        <Tool icon="batch" off>批量选择</Tool>
        <More>»</More>
      </Group>
      <Group>
        <Tool icon="square">二维</Tool>
        <Arrow />
        <Tool icon="cube">俯视</Tool>
        <Arrow />
        <Tool icon="orbit">动态观察</Tool>
        <Tool icon="partial">局部三维</Tool>
        <Sep $mr={1} />
        <Tool icon="full">全屏</Tool>
        <Tool icon="zoom">缩放</Tool>
        <Arrow />
        <Tool icon="hand">平移</Tool>
        <Arrow />
        <Tool icon="screen">屏幕旋转</Tool>
        <Arrow $tight />
        <Sep $mr={1} />
        <Tool icon="floors">选择楼层</Tool>
        <More>»</More>
      </Group>
    </Strip>

    <Workspace>
      <LeftPanel>
        <PanelHeader>
          <PanelTitle>模块导航栏</PanelTitle>
          <Art w={10} h={12} vb="0 0 10 12"><path d="M3 1h4v5l1 1H2l1-1zM5 7v5" fill="none" stroke="#111" /></Art>
          <Art w={16} h={12} vb="0 0 16 12"><path d="M5 2l8 8M13 2l-8 8" stroke="#333" /></Art>
        </PanelHeader>
        <NavButton>工程设置</NavButton>
        <NavButton>绘图输入</NavButton>
        <TreeTools>
          <Art w={17} h={16} vb="0 0 17 16">
            <path d="M4 1v8M1 5h7M12 7v8M9 11h7" stroke="#0a5f50" strokeWidth="2.200" />
          </Art>
          <Art w={17} h={16} vb="0 0 17 16">
            <path d="M1 5h7M9 11h8" stroke="#0a5f50" strokeWidth="2.200" />
          </Art>
        </TreeTools>
        <TreeBox>
          <TreeList>
            {tree.map((t, i) => (t.length >= 3
              ? <Leaf key={i} icon={t[0]} name={t[1]} hot={t[2]} last={t[3] === 'last'} on={t[3] === 'on'} />
              : <Folder key={i} name={t[0]} open={t[1] === 'open'} />))}
          </TreeList>
          <ScrollBar>
            <ScrollCap>
              <Art w={10} h={8} vb="0 0 10 8"><path d="M1 6l4-4 4 4" fill="none" stroke="#606060" strokeWidth="1.800" /></Art>
            </ScrollCap>
            <ScrollTrack><ScrollThumb /></ScrollTrack>
            <ScrollCap>
              <Art w={10} h={8} vb="0 0 10 8"><path d="M1 2l4 4 4-4" fill="none" stroke="#606060" strokeWidth="1.800" /></Art>
            </ScrollCap>
          </ScrollBar>
        </TreeBox>
        <NavButton>单构件输入</NavButton>
        <NavButton>报表预览</NavButton>
      </LeftPanel>

      <RightColumn>
        <Strip $h={25} $mt={1}>
          <Group $w={790}>
            <Gripper />
            <Tool icon="brush">删除</Tool>
            <Sep />
            <Tool icon="copy">复制</Tool>
            <Tool icon="mirror">镜像</Tool>
            <Sep />
            <Tool icon="move">移动</Tool>
            <Tool icon="spin">旋转</Tool>
            <Sep />
            <Tool icon="extend">延伸</Tool>
            <Tool icon="trim">修剪</Tool>
            <Sep />
            <Tool icon="split">打断</Tool>
            <Tool icon="merge">合并</Tool>
            <Tool icon="cut" off>分割</Tool>
            <Sep />
            <Tool icon="align">对齐</Tool>
            <Arrow $tight />
            <Tool icon="offset">偏移</Tool>
            <Tool icon="stretch">拉伸</Tool>
            <Sep />
            <Tool icon="grip" off>设置夹点</Tool>
          </Group>
        </Strip>

        <Strip $h={26} $mt={1}>
          <Group $w={639} $mr={2}>
            <Gripper $mr={3} />
            <Combo $w={58} $mr={2}>首层<Arrow /></Combo>
            <Combo $w={70} $mr={2}>梁<Arrow /></Combo>
            <Combo $w={70} $mr={2}>梁<Arrow /></Combo>
            <Combo $w={69} $mr={2}>雨篷梁-1<Arrow /></Combo>
            <Combo $w={70}>分层1<Arrow /></Combo>
            <Sep $ml={6} $mr={1} />
            <Tool icon="prop">属性</Tool>
            <Tool icon="edit">编辑钢筋</Tool>
            <Tool icon="list">构件列表</Tool>
            <Tool icon="pick">拾取构件</Tool>
          </Group>
          <Group $w={421}>
            <Gripper $ml={3} $mr={1} />
            <Tool icon="two">两点</Tool>
            <Tool icon="parallel">平行</Tool>
            <Tool icon="angle">点角</Tool>
            <Arrow />
            <Tool icon="arc3">三点辅轴</Tool>
            <Arrow />
            <Tool icon="broom">删除辅轴</Tool>
            <Tool icon="dim">尺寸标注</Tool>
            <Arrow />
          </Group>
        </Strip>

        <Strip $h={28} $mt={2}>
          <Group>
            <Gripper />
            <Tool icon="pointer">选择</Tool>
            <Arrow />
            <Sep />
            <Tool icon="line" active>直线</Tool>
            <Tool icon="addlen">点加长度</Tool>
            <Tool icon="arc">三点画弧</Tool>
            <Arrow />
            <Combo $w={56} $mr={2}><span /><Arrow /></Combo>
            <Tool icon="square">矩形</Tool>
            <Sep $mr={1} />
            <Tool icon="smart">智能布置</Tool>
            <Arrow $tight />
            <Sep $mr={1} />
            <Tool icon="funnel">修改梁段属性</Tool>
            <Tool icon="mark">原位标注</Tool>
            <Arrow />
            <Tool icon="refetch">重提梁跨</Tool>
            <Arrow />
            <Tool icon="sweep">梁跨数据复制</Tool>
            <Arrow />
            <Tool icon="detect">批量识别梁支座</Tool>
            <More>»</More>
            <Gripper $ml={8} $mr={26} />
          </Group>
        </Strip>

        <Canvas><Drawing /></Canvas>

        <SnapBar>
          <Group $w={262} $mr={3}>
            <Gripper $ml={2} $mr={3} />
            <Tool icon="cross">交点</Tool>
            <Tool icon="perp" active>垂点</Tool>
            <Tool icon="mid" active>中点</Tool>
            <Tool icon="vertex">顶点</Tool>
            <Tool icon="coord">坐标</Tool>
          </Group>
          <Group $w={409}>
            <Gripper $ml={2} $mr={3} />
            <Combo $w={57}>不偏移<Arrow /></Combo>
            <Sep />
            <SnapLabel $ml={2} $w={19}>X=</SnapLabel>
            <Spin $w={58}>0</Spin>
            <SnapLabel $ml={2} $w={25}>mm</SnapLabel>
            <SnapLabel $w={19}>Y=</SnapLabel>
            <Spin $w={58}>0</Spin>
            <SnapLabel $ml={2} $w={24}>mm</SnapLabel>
            <Sep />
            <MiniCheck />
            <SnapText>旋转</SnapText>
            <Spin $ml={4} $w={68}>0.000</Spin>
            <SnapLabel $ml={2} $w={6}>°</SnapLabel>
          </Group>
        </SnapBar>
      </RightColumn>
    </Workspace>

    <StatusBar>
      <StatusCell $w={147}><Hot>X=26374 Y=13048</Hot></StatusCell>
      <StatusCell $w={77}>层高<Hot>:4.5m</Hot></StatusCell>
      <StatusCell $w={97}>底标高<Hot>:-0.05m</Hot></StatusCell>
      <StatusCell $w={46}><Hot>0</Hot></StatusCell>
      <StatusCell>按鼠标左键指定第一个端点，按右键中止或<Hot>ESC</Hot>取消</StatusCell>
      <StatusCell $w={70}><Hot>184.4 FPS</Hot></StatusCell>
    </StatusBar>

    <Taskbar>
      <Start>
        <Art w={16} h={16} vb="0 0 16 16">
          <path d="M0 2.500l6.500-1V7.500H0zM7.500 1.300L16 0v7.500H7.500zM0 8.500h6.500v6l-6.500-1zM7.500 8.500H16V16l-8.500-1.300z" fill="#fff" />
        </Art>
      </Start>
      <Search>
        <Art w={22} h={22} vb="0 0 22 22"><circle cx="11" cy="11" r="9" fill="none" stroke="#e8e8e8" strokeWidth="2.500" /></Art>
        在这里输入你要搜索的内容
        <Slot $ml={103} $w={16}>
          <Art w={12} h={20} vb="0 0 12 20"><rect x="3" y="1" width="6" height="11" rx="3" fill="none" stroke="#999" /><path d="M1 8c0 7 10 7 10 0M6 14v4M3 18h6" fill="none" stroke="#999" /></Art>
        </Slot>
      </Search>
      <Slot $w={48}>
        <Art w={22} h={22} vb="0 0 22 22"><rect x="5" y="3" width="12" height="16" fill="none" stroke="#fff" strokeWidth="1.400" /><path d="M2 6v10M20 6v10" stroke="#fff" /></Art>
      </Slot>
      <Slot $w={51}>
        <Art w={26} h={26} vb="0 0 26 26"><path d="M12 12C6 12 3 9 3 6s5-5 8-2 2 6 1 8zM14 12c0-6 3-9 6-9s5 5 2 8-6 2-8 1zM14 14c6 0 9 3 9 6s-5 5-8 2-2-6-1-8zM12 14c0 6-3 9-6 9s-5-5-2-8 6-2 8-1z" fill="#e4e4e4" /></Art>
      </Slot>
      <Slot $w={52}>
        <Art><path d="M4 13c0-7 5-10 9-10s7 4 7 9H9c0 6 7 7 10 3v4c-5 3-15 2-15-6z" fill="#e8e8e8" /><path d="M2 20c-2-6 6-15 18-18" fill="none" stroke="#e8e8e8" /></Art>
      </Slot>
      <Slot $w={55}>
        <Art w={32} h={26} vb="0 0 32 26">
          <path d="M20 6C14 1 6 4 6 12s8 11 13 7c3-3 1-9-4-9s-6 6-2 8" fill="none" stroke="#c8c8c8" strokeWidth="2" />
          <path d="M24 1c3 0 4 3 4 5l2 4H18l2-4c0-2 1-5 4-5z" fill="#f5a623" />
        </Art>
      </Slot>
      <Slot $w={48}>
        <Art w={26} h={26} vb="0 0 24 24"><path d="M3 12C3 5 8 2 13 2c6 0 9 5 9 11H9c0 6 8 7 12 3v5c-6 3-18 2-18-9zM9 10h7c0-4-6-4-7 0z" fill="#0f7fd6" fillRule="evenodd" /></Art>
      </Slot>
      <Slot $w={48}>
        <Art w={26} h={26} vb="0 0 24 24"><path d="M3 12C3 5 8 2 13 2c6 0 9 5 9 11H9c0 6 8 7 12 3v5c-6 3-18 2-18-9zM9 10h7c0-4-6-4-7 0z" fill="#1ba1e2" fillRule="evenodd" /><path d="M1 20C0 14 12 1 23 1" fill="none" stroke="#f4b81c" strokeWidth="2" /></Art>
      </Slot>
      <Slot $w={49}>
        <Art><path d="M2 5h8l2 2h10v14H2z" fill="#f6d26b" /><rect x="2" y="8" width="20" height="13" fill="#fae29a" /><rect x="8" y="15" width="8" height="6" fill="#27a0e6" /></Art>
      </Slot>
      <Slot $w={48} $run>
        <Art><rect x="1" y="1" width="22" height="22" rx="2" fill="#f0882a" /><rect x="5" y="4" width="14" height="16" fill="#fbeec0" /><path d="M7 8h9M7 11h9M7 14h6" stroke="#b5752a" /><path d="M21 2L12 16" stroke="#c33" strokeWidth="2" /></Art>
      </Slot>
      <Slot $w={49} $run>
        <Art><path d="M18 2C8 2 3 8 4 14c1 6 7 9 12 6 4-3 3-9-2-9-3 0-4 3-3 5 1-1 3-1 3 1-3 2-7 0-6-4 1-4 6-5 9-4 3-2 3-5 1-7z" fill="#1488e8" /></Art>
      </Slot>
      <Slot $w={48} $run>
        <Art><circle cx="12" cy="13" r="10" fill="#6fbf2f" /><path d="M6 13h12c0-6-10-6-11 0 0 6 8 7 11 3" fill="none" stroke="#fff" strokeWidth="2.400" /><path d="M8 3c5-3 10-2 13 2" fill="none" stroke="#2a6f1a" strokeWidth="2" /></Art>
      </Slot>
      <Slot $w={48} $on $run>
        <Art w={26} h={26} vb="0 0 26 26">
          <rect width="26" height="26" rx="4" fill="#1299ee" />
          <path d="M13 5v16M6 11c0 5 4 6 7 4M20 14c0-5-4-6-7-4" fill="none" stroke="#fff" strokeWidth="2" />
        </Art>
      </Slot>
      <Slot $w={51}><TrayText $s={12}>链接</TrayText></Slot>
      <Stack $w={60}><span>21%</span><span>CPU使用</span></Stack>
      <Slot $w={30}><Art w={14} h={10} vb="0 0 14 10"><path d="M1 8l6-6 6 6" fill="none" stroke="#e8e8e8" strokeWidth="1.300" /></Art></Slot>
      <Slot $w={26}><Art w={18} h={14} vb="0 0 18 14"><rect x="2" y="5" width="13" height="8" fill="none" stroke="#eee" /><rect x="3" y="6" width="7" height="6" fill="#eee" /><path d="M4 0v5M7 0v5" stroke="#eee" /></Art></Slot>
      <Slot $w={24}><Art w={18} h={16} vb="0 0 18 16"><path d="M2 14c0-6 5-11 12-12M6 14c0-4 3-7 8-8M10 14c0-2 1-3 4-4" fill="none" stroke="#ccc" /><circle cx="15" cy="13" r="1.500" fill="#eee" /></Art></Slot>
      <Slot $w={22}><Art w={16} h={16} vb="0 0 16 16"><path d="M1 6h3l4-4v12l-4-4H1z" fill="none" stroke="#eee" /><path d="M10 5c1 2 1 4 0 6M12 3c2 3 2 7 0 10" fill="none" stroke="#eee" /></Art></Slot>
      <Slot $w={32}><Art w={24} h={18} vb="0 0 24 18"><rect x="1" y="1" width="22" height="16" fill="none" stroke="#eee" /><path d="M4 5h16M4 8h16M7 12h10" stroke="#eee" strokeDasharray="1.500 1" /></Art></Slot>
      <Slot $w={26}><TrayText $s={14}>中</TrayText></Slot>
      <Slot $w={30}><SogouLogo size={18} /></Slot>
      <Stack $w={80}><span>9:38</span><span>2018/5/31</span></Stack>
      <Slot $w={34}>
        <Art w={18} h={18} vb="0 0 18 18"><path d="M1 1h16v13h-7l-3 3v-3H1z" fill="#fff" /><path d="M4 5h10M4 8h10M4 11h6" stroke="#222" /></Art>
        <Badge>1</Badge>
      </Slot>
    </Taskbar>

    <Dialog>
      <DialogTitle>
        自动布置吊筋
        <Art w={12} h={12} vb="0 0 12 12"><path d="M1 1l10 10M11 1L1 11" stroke="#111" /></Art>
      </DialogTitle>
      <GroupRow>
        <Box $w={201} $pad="31px 0 0 14px">
          <Legend $x={4}>生成位置</Legend>
          <CheckRow><CheckBox><Tick /></CheckBox>主梁与次梁相交，主梁上。</CheckRow>
          <CheckRow><CheckBox><Tick /></CheckBox>同截面同类型次梁，均设置</CheckRow>
          <Note $m="15px 0 0">（主梁是指梁相交处为支座的梁。</Note>
          <Note $m="0">次梁是指相交处不为支座的梁）</Note>
        </Box>
        <Box $w={186} $pad="22px 0 0 14px">
          <Legend $x={5}>钢筋信息</Legend>
          <Field $mb={22}><FieldLabel>吊筋:</FieldLabel><FieldInput /></Field>
          <Field><FieldLabel>次梁加筋:</FieldLabel><FieldInput>6</FieldInput></Field>
          <Note $m="7px 0 0">（其他钢筋设置，增加数量，</Note>
          <Note $m="0">信息取自计算设置，可修改）</Note>
        </Box>
      </GroupRow>
      <CheckRow $m="13px 0 8px 8px"><CheckBox />整楼生成</CheckRow>
      <Note $m="0 0 0 8px">说明：1、梁和梁相交处有柱或墙时，不生成吊筋和次梁加筋。</Note>
      <Note $m="0 0 0 44px">2、未提取梁跨的梁不布置吊筋和次梁加筋。</Note>
      <ButtonRow>
        <DialogButton $primary>确定</DialogButton>
        <DialogButton>取消</DialogButton>
      </ButtonRow>
    </Dialog>

    <Mark $x={457} $y={228} $w={127} $h={68} />
    <Mark $x={684} $y={331} $w={200} $h={58} />
    <Mark $x={450} $y={416} $w={131} $h={49} />
    <Mark $x={691} $y={471} $w={105} $h={52} />
    <Mark $x={1281} $y={125} $w={81} $h={58} $b={6} />

    <ImeBar>
      <ImeChar>中</ImeChar>
      <Art w={14} h={16} vb="0 0 14 16"><circle cx="3" cy="6" r="2" fill="#1d7ec8" /><path d="M11 5c1 3 0 6-3 7" fill="none" stroke="#1d7ec8" strokeWidth="2.200" /></Art>
      <Art w={18} h={18} vb="0 0 18 18"><circle cx="9" cy="9" r="7.500" fill="none" stroke="#1d7ec8" strokeWidth="1.500" /><path d="M6 6v3M12 6v3M5 11c2 3 6 3 8 0" fill="none" stroke="#1d7ec8" strokeWidth="1.500" /></Art>
      <Art w={14} h={18} vb="0 0 14 18"><rect x="4" y="1" width="6" height="10" rx="3" fill="#1d7ec8" /><path d="M2 8c0 5 10 5 10 0M7 13v4M4 17h6" fill="none" stroke="#1d7ec8" strokeWidth="1.300" /></Art>
      <Art w={18} h={16} vb="0 0 18 16"><rect x="1" y="2" width="16" height="12" rx="1" fill="#1d7ec8" /><path d="M3 5h12M3 8h12M5 11h8" stroke="#fff" strokeDasharray="1.500 1" /></Art>
      <Art w={18} h={16} vb="0 0 18 16"><circle cx="7" cy="4" r="3" fill="#b5c2cf" /><path d="M2 14c0-5 8-5 9 0z" fill="#b5c2cf" /><rect x="9" y="9" width="8" height="6" fill="#fff" stroke="#b5c2cf" /></Art>
      <Art w={16} h={16} vb="0 0 16 16"><path d="M5 1l3 2 3-2 4 3-2 3-1-1v9H4V6L3 7 1 4z" fill="#1d7ec8" /></Art>
      <Art w={16} h={16} vb="0 0 16 16"><path d="M14 2l-3 3-1-2 2-2c-4-1-6 2-5 5l-6 6 2 3 6-6c3 1 6-2 5-7z" fill="#1d7ec8" /></Art>
    </ImeBar>
    <ImeLogo><SogouLogo /></ImeLogo>
    <ScoreBall>65</ScoreBall>
  </Root>
)

export default App
